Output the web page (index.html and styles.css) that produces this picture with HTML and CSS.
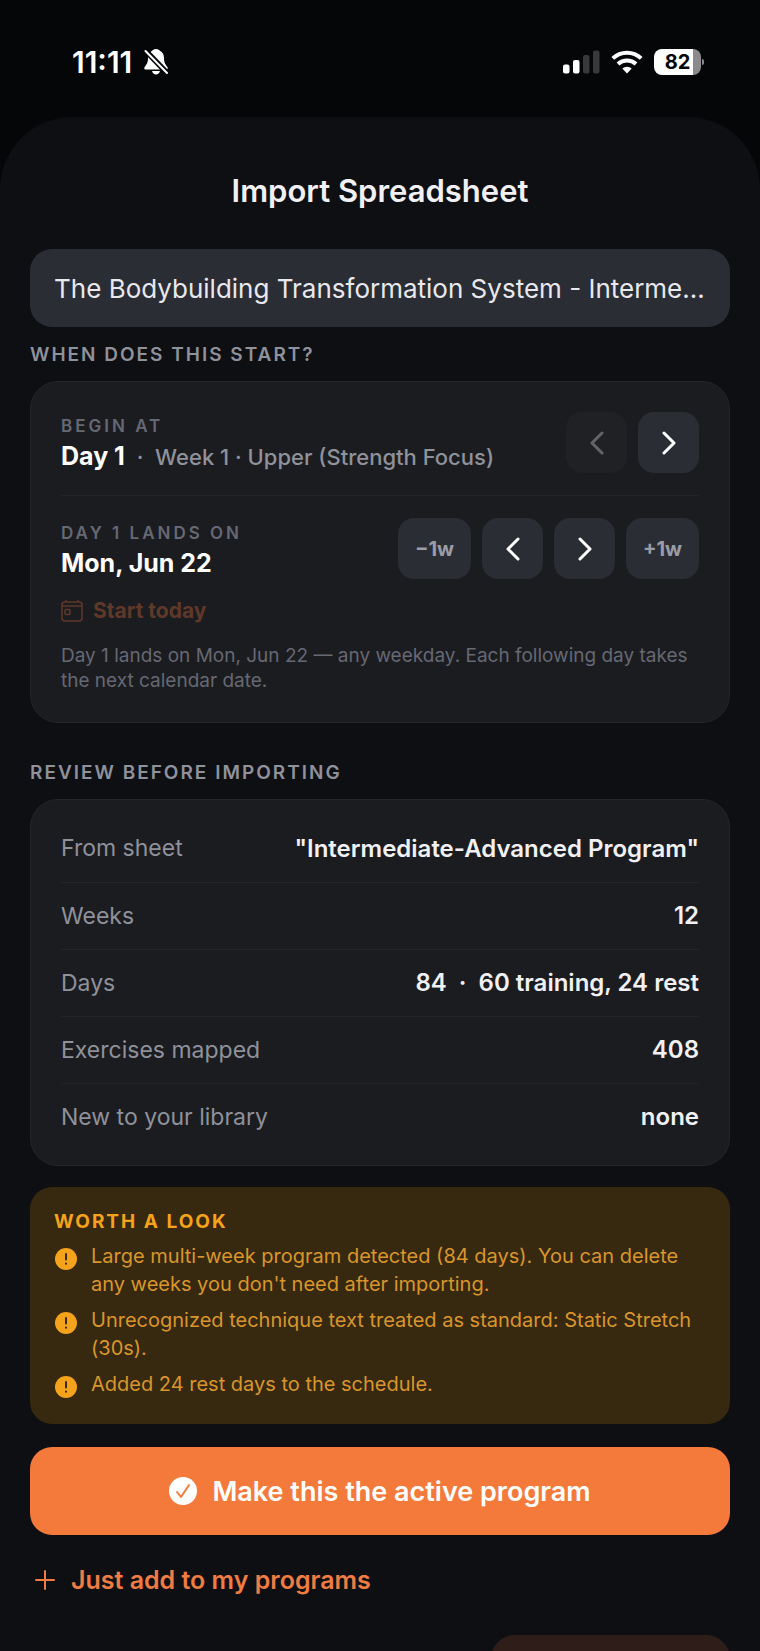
FILE: index.html
```
<!DOCTYPE html>
<html lang="en">
<head>
    <meta charset="UTF-8">
    <meta name="viewport" content="width=device-width, initial-scale=1.0">
    <title>Import Spreadsheet</title>
    <link rel="stylesheet" href="styles.css">
</head>
<body>
    <header class="status-bar">
        <div class="status-left">
            <span class="time">11:11</span>
            <svg width="24" height="26" viewBox="0 0 24 26">
                <path fill="#fff" d="M12 0C9.500 0 8.600 1.200 8.200 1.800 5.200 3 4 6 4 9c0 5-1.500 6.500-3.200 8.700C-.3 19.200.3 20.500 2 20.500h20c1.700 0 2.300-1.300 1.200-2.800C21.500 15.500 20 14 20 9c0-3-1.200-6-4.200-7.200C15.400 1.200 14.500 0 12 0zM8 22h8c-.6 2.200-2 3.400-4 3.400S8.600 24.200 8 22z"/>
                <path stroke="#050608" stroke-width="5.500" d="M0 0l24 25"/>
                <path stroke="#fff" stroke-width="2" stroke-linecap="round" d="M1.500 2l21.500 22"/>
            </svg>
        </div>
        <div class="status-right">
            <svg width="38" height="24" viewBox="0 0 38 24">
                <rect x="1" y="14.500" width="6.500" height="9" rx="2" fill="#fff"/>
                <rect x="11" y="10" width="6.500" height="13.500" rx="2" fill="#fff"/>
                <rect x="21" y="5" width="6.500" height="18.500" rx="2" fill="#38393b"/>
                <rect x="31" y="0.500" width="6.500" height="23" rx="2" fill="#38393b"/>
            </svg>
            <svg width="32" height="24" viewBox="0 0 32 24">
                <g fill="none" stroke="#fff" stroke-width="4">
                    <path d="M1.800 8.400a20.500 20.500 0 0 1 28.400 0"/>
                    <path d="M7 14a13 13 0 0 1 18 0"/>
                </g>
                <path fill="#fff" d="M11.300 18.600a7 7 0 0 1 9.400 0L16 23.500z"/>
            </svg>
            <div class="battery"><span class="battery-level">82</span></div>
        </div>
    </header>

    <main class="sheet">
        <h1>Import Spreadsheet</h1>
        <input class="name-input" type="text" aria-label="Name" value="The Bodybuilding Transformation System - Interme…">

        <h2>When does this start?</h2>
        <section class="card start-card">
            <div class="start-row">
                <div>
                    <div class="caption">Begin at</div>
                    <div class="value">Day 1 <span class="detail">&nbsp;·&nbsp; Week 1 · Upper (Strength Focus)</span></div>
                </div>
                <div class="steppers">
                    <button class="step" disabled>
                        <svg class="chevron" viewBox="0 0 16 24"><path d="M13 2L3 12l10 10"/></svg>
                    </button>
                    <button class="step">
                        <svg class="chevron" viewBox="0 0 16 24"><path d="M3 2l10 10L3 22"/></svg>
                    </button>
                </div>
            </div>
            <div class="start-row">
                <div>
                    <div class="caption">Day 1 lands on</div>
                    <div class="value">Mon, Jun 22</div>
                </div>
                <div class="steppers">
                    <button class="step week">−1w</button>
                    <button class="step">
                        <svg class="chevron" viewBox="0 0 16 24"><path d="M13 2L3 12l10 10"/></svg>
                    </button>
                    <button class="step">
                        <svg class="chevron" viewBox="0 0 16 24"><path d="M3 2l10 10L3 22"/></svg>
                    </button>
                    <button class="step week">+1w</button>
                </div>
            </div>
            <button class="today" disabled>
                <svg width="22" height="22" viewBox="0 0 22 22" fill="none" stroke="currentColor" stroke-width="1.500">
                    <rect x="1" y="2" width="20" height="19" rx="3"/>
                    <path d="M1 6h20M5 0v2M17 0v2"/>
                    <rect x="4" y="9.500" width="5" height="5" rx="1"/>
                </svg>
                Start today
            </button>
            <p class="hint">Day 1 lands on Mon, Jun 22 — any weekday. Each following day takes the next calendar date.</p>
        </section>

        <h2 class="review-title">Review before importing</h2>
        <section class="card">
            <table class="review">
                <tr><th scope="row">From sheet</th><td>"Intermediate-Advanced Program"</td></tr>
                <tr><th scope="row">Weeks</th><td>12</td></tr>
                <tr><th scope="row">Days</th><td>84 &nbsp;·&nbsp; 60 training, 24 rest</td></tr>
                <tr><th scope="row">Exercises mapped</th><td>408</td></tr>
                <tr><th scope="row">New to your library</th><td>none</td></tr>
            </table>
        </section>

        <section class="warnings">
            <h2>Worth a look</h2>
            <ul>
                <li>
                    <svg class="alert" viewBox="0 0 22 22"><circle cx="11" cy="11" r="11"/><path d="M11 6v5.500M11 15.600v.2"/></svg>
                    <span>Large multi-week program detected (84 days). You can delete any weeks you don't need after importing.</span>
                </li>
                <li>
                    <svg class="alert" viewBox="0 0 22 22"><circle cx="11" cy="11" r="11"/><path d="M11 6v5.500M11 15.600v.2"/></svg>
                    <span>Unrecognized technique text treated as standard: Static Stretch (30s).</span>
                </li>
                <li>
                    <svg class="alert" viewBox="0 0 22 22"><circle cx="11" cy="11" r="11"/><path d="M11 6v5.500M11 15.600v.2"/></svg>
                    <span>Added 24 rest days to the schedule.</span>
                </li>
            </ul>
        </section>

        <button class="primary">
            <svg width="28" height="28" viewBox="0 0 28 28">
                <circle cx="14" cy="14" r="14" fill="#fff"/>
                <path d="M8 15l4 5 8-12" fill="none" stroke="#f47a3b" stroke-width="2" stroke-linecap="round" stroke-linejoin="round"/>
            </svg>
            Make this the active program
        </button>
        <button class="secondary">
            <svg width="20" height="20" viewBox="0 0 20 20"><path d="M10 1v18M1 10h18" stroke="currentColor" stroke-width="2" stroke-linecap="round"/></svg>
            Just add to my programs
        </button>
        <div class="next-action"></div>
    </main>
</body>
</html>
```
FILE: styles.css
```
* {
    box-sizing: border-box;
}
body {
    margin: 0;
    height: 100vh;
    overflow: hidden;
    display: flex;
    flex-direction: column;
    background-color: #050608;
    color: #f1f1f5;
    font-family: Inter, "Liberation Sans", sans-serif;
}
h1, h2, p, ul {
    margin: 0;
    padding: 0;
}
button, input {
    font-family: inherit;
    border: none;
}
button {
    padding: 0;
    cursor: pointer;
}
.status-bar {
    display: flex;
    justify-content: space-between;
    align-items: center;
    flex: none;
    height: 117px;
    padding: 6px 56px 0 72px;
}
.status-left, .status-right {
    display: flex;
    align-items: center;
}
.status-left {
    gap: 12px;
}
.status-right {
    gap: 11px;
}
.time {
    font-size: 30px;
    font-weight: 600;
    color: #fff;
}
.battery {
    display: flex;
    align-items: center;
}
.battery-level {
    width: 47px;
    height: 26px;
    border-radius: 8px;
    background: linear-gradient(to right, #fff 39px, #8b8b8d 39px);
    color: #050608;
    font-size: 20px;
    font-weight: 700;
    line-height: 26px;
    text-align: center;
}
.battery::after {
    content: "";
    width: 2px;
    height: 6px;
    margin-left: 1px;
    border-radius: 0 2px 2px 0;
    background-color: #8b8b8d;
}
.sheet {
    flex: 1;
    min-height: 0;
    overflow: hidden;
    display: flex;
    flex-direction: column;
    padding: 54px 30px 0;
    border-radius: 72px 72px 0 0;
    background-color: #0e0f13;
}
.sheet > * {
    flex: none;
}
h1 {
    font-size: 31px;
    font-weight: 600;
    line-height: 40px;
    text-align: center;
}
h2 {
    color: #8f919b;
    font-size: 19px;
    font-weight: 600;
    line-height: 24px;
    letter-spacing: 2px;
    text-transform: uppercase;
}
.name-input {
    width: 100%;
    height: 78px;
    margin: 38px 0 16px;
    padding: 0 24px;
    border-radius: 22px;
    background-color: #2b2d35;
    color: #e8e8ed;
    font-size: 26px;
    text-overflow: ellipsis;
}
.card {
    margin-top: 14px;
    padding: 15px 30px;
    border: 1px solid #242529;
    border-radius: 28px;
    background-color: #1b1c20;
}
.start-card {
    padding: 8px 30px 29px;
}
.start-row {
    display: flex;
    justify-content: space-between;
    align-items: center;
    padding: 22px 0;
}
.start-row + .start-row {
    padding-bottom: 0;
    border-top: 1px solid #242529;
}
.caption {
    color: #666873;
    font-size: 17px;
    font-weight: 600;
    line-height: 28px;
    letter-spacing: 3px;
    text-transform: uppercase;
}
.value {
    color: #fff;
    font-size: 25px;
    font-weight: 700;
    line-height: 32px;
}
.detail {
    color: #8f919b;
    font-size: 22px;
    font-weight: 500;
}
.steppers {
    display: flex;
    gap: 11px;
}
.step {
    display: flex;
    align-items: center;
    justify-content: center;
    width: 61px;
    height: 61px;
    border-radius: 16px;
    background-color: #2b2d35;
    color: #fff;
}
.step:disabled {
    background-color: #202125;
    color: #636468;
}
.week {
    width: 73px;
    color: #9a9ca6;
    font-size: 20px;
    font-weight: 700;
}
.chevron {
    width: 16px;
    height: 24px;
    fill: none;
    stroke: currentColor;
    stroke-width: 3;
    stroke-linecap: round;
    stroke-linejoin: round;
}
.today {
    display: flex;
    align-items: center;
    gap: 10px;
    margin-top: 20px;
    background: none;
    color: #5f3829;
    font-size: 21px;
    font-weight: 700;
    line-height: 24px;
}
.hint {
    margin-top: 20px;
    color: #666873;
    font-size: 19px;
    line-height: 25px;
}
.review-title {
    margin-top: 38px;
}
.review {
    width: 100%;
    border-collapse: collapse;
}
.review th, .review td {
    height: 67px;
    padding: 0;
}
.review tr + tr {
    border-top: 1px solid #242529;
}
.review th {
    color: #8f919b;
    font-size: 23px;
    font-weight: 400;
    text-align: left;
}
.review td {
    font-size: 24px;
    font-weight: 600;
    text-align: right;
}
.warnings {
    margin-top: 21px;
    padding: 23px 24px 26px;
    border-radius: 22px;
    background-color: #372810;
    color: #d9962b;
}
.warnings h2 {
    color: #f5a31a;
    font-weight: 700;
}
.warnings ul {
    display: flex;
    flex-direction: column;
    gap: 8px;
    margin-top: 8px;
    list-style: none;
}
.warnings li {
    display: flex;
    gap: 14px;
    font-size: 20px;
    line-height: 28px;
}
.alert {
    flex: none;
    width: 22px;
    height: 22px;
    margin: 6px 0 0 1px;
    fill: #f5a31a;
    stroke: none;
}
.alert path {
    stroke: #372810;
    stroke-width: 2;
    stroke-linecap: round;
}
.primary {
    display: flex;
    align-items: center;
    justify-content: center;
    gap: 15px;
    height: 88px;
    margin-top: 23px;
    border-radius: 22px;
    background-color: #f47a3b;
    color: #fff;
    font-size: 27px;
    font-weight: 600;
}
.secondary {
    display: flex;
    align-items: center;
    align-self: flex-start;
    gap: 16px;
    height: 90px;
    padding-left: 5px;
    background: none;
    color: #ee7c43;
    font-size: 25px;
    font-weight: 600;
}
.next-action {
    align-self: flex-end;
    width: 239px;
    height: 84px;
    margin-top: 10px;
    border-radius: 24px;
    background-color: #2e1d19;
}
```
